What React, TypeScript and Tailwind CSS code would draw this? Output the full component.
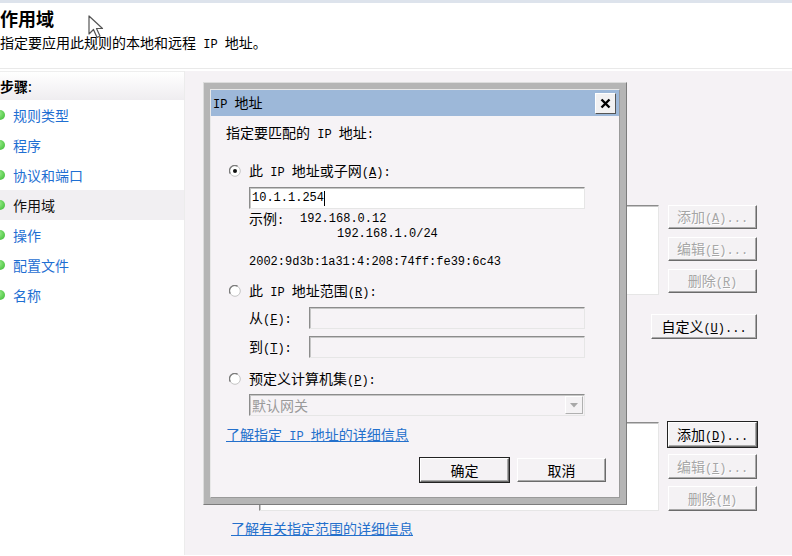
import React from 'react';
import clsx from 'clsx';

// splits a label into ascii / cjk runs so the ascii part can use a half-width mono face
function Mixed({ text }: { text: string }) {
  const parts = text.match(/[\x00-\x7F]+|[^\x00-\x7F]+/g) ?? [];
  return (
    <span className="whitespace-pre">
      {parts.map((p, i) =>
        /^[\x00-\x7F]/.test(p) ? (
          <span key={i} className="font-['Liberation_Mono'] text-[12px]">{p}</span>
        ) : (
          <span key={i}>{p}</span>
        )
      )}
    </span>
  );
}

function Acc({ before, k, after }: { before: string; k: string; after: string }) {
  return (
    <span className="whitespace-pre">
      <Mixed text={before} />
      <span className="font-['Liberation_Mono'] text-[12px]">(</span>
      <span className="font-['Liberation_Mono'] text-[12px] underline">{k}</span>
      <Mixed text={')' + after} />
    </span>
  );
}

function Btn({
  children,
  className,
  def,
  disabled,
}: {
  children: React.ReactNode;
  className?: string;
  def?: boolean;
  disabled?: boolean;
}) {
  return (
    <div
      className={clsx(
        'flex items-center justify-center bg-[#f4f2f4] border border-t-white border-l-white border-r-[#6b6b6b] border-b-[#6b6b6b] shadow-[inset_-1px_-1px_0_#a9a9a9] whitespace-pre',
        def && 'outline outline-1 outline-[#222]',
        disabled ? 'text-[#a6a6a6] [text-shadow:1px_1px_0_#fff]' : 'text-black',
        className
      )}
    >
      {children}
    </div>
  );
}

function Radio({ checked }: { checked?: boolean }) {
  return (
    <svg width="12" height="12" viewBox="0 0 12 12" className="shrink-0">
      <circle cx="6" cy="6" r="5.3" fill="#fff" stroke="#c4c4c4" strokeWidth="1" />
      <path d="M1.3 8.6 A5.3 5.3 0 0 1 8.6 1.3" fill="none" stroke="#7c7c7c" strokeWidth="1.3" />
      {checked && <circle cx="6" cy="6" r="2" fill="#111" />}
    </svg>
  );
}

function Sunken({ className, children }: { className?: string; children?: React.ReactNode }) {
  return (
    <div
      className={clsx(
        'border border-t-[#8c8c8c] border-l-[#8c8c8c] border-r-[#e6e6e6] border-b-[#e6e6e6] shadow-[inset_1px_1px_0_#c6c6c6]',
        className
      )}
    >
      {children}
    </div>
  );
}

const steps = ['规则类型', '程序', '协议和端口', '作用域', '操作', '配置文件', '名称'];

export default function App() {
  return (
    <div className="relative w-[792px] h-[556px] overflow-hidden bg-white font-['Noto_Sans_CJK_SC',sans-serif] text-[14px] leading-none text-black">
      <div className="h-[3px] bg-[#dde3ec]" />

      {/* header */}
      <div className="h-[66px] border-b border-[#e9e9e9]">
        <div className="pt-[8px] h-[22px] text-[18px] font-bold flex items-center">作用域</div>
        <div className="mt-[10px] h-[16px] flex items-center">
          <Mixed text="指定要应用此规则的本地和远程 IP 地址。" />
        </div>
      </div>

      <div className="flex h-[486px] pt-[2px]">
        {/* steps */}
        <div className="w-[185px] bg-white border-r border-[#ececec]">
          <div className="h-[29px] border-t border-[#eeeeee] bg-gradient-to-b from-white to-[#efedf0] flex items-center font-bold">
            步骤<span className="font-normal">:</span>
          </div>
          {steps.map((s) => (
            <div
              key={s}
              className={clsx(
                'h-[30px] flex items-center',
                s === '作用域' ? 'bg-[#f1eff2] text-[#111]' : 'text-[#1f6fd2]'
              )}
            >
              <span className="-ml-[5px] mr-[8px] w-[10px] h-[10px] rounded-full bg-[radial-gradient(circle_at_35%_35%,#9ef08e,#33b52c)]" />
              {s}
            </div>
          ))}
        </div>

        {/* main panel behind the dialog */}
        <div className="flex-1 bg-[#f5f2f5] pl-[46px]">
          <div className="ml-[28px] mt-[134px] flex gap-[9px]">
            <Sunken className="w-[400px] h-[90px] bg-white" />
            <div className="flex flex-col gap-[8px]">
              <Btn className="w-[89px] h-[24px]" disabled>
                <Acc before="添加" k="A" after="..." />
              </Btn>
              <Btn className="w-[89px] h-[24px]" disabled>
                <Acc before="编辑" k="E" after="..." />
              </Btn>
              <Btn className="w-[89px] h-[24px]" disabled>
                <Acc before="删除" k="R" after="" />
              </Btn>
            </div>
          </div>
          <div className="ml-[28px] w-[498px] mt-[19px] flex justify-end">
            <Btn className="w-[106px] h-[25px]">
              <Acc before="自定义" k="U" after="..." />
            </Btn>
          </div>
          <div className="ml-[28px] mt-[83px] flex gap-[9px]">
            <Sunken className="w-[400px] h-[89px] bg-white" />
            <div className="flex flex-col gap-[7px]">
              <Btn className="w-[89px] h-[25px]" def>
                <Acc before="添加" k="D" after="..." />
              </Btn>
              <Btn className="w-[89px] h-[25px]" disabled>
                <Acc before="编辑" k="I" after="..." />
              </Btn>
              <Btn className="w-[89px] h-[25px]" disabled>
                <Acc before="删除" k="M" after="" />
              </Btn>
            </div>
          </div>
          <div className="mt-[9px] h-[16px] flex items-center">
            <span className="text-[#2470cc] underline">了解有关指定范围的详细信息</span>
          </div>
        </div>
      </div>

      {/* IP dialog */}
      <div className="absolute left-[203px] top-[82px] w-[424px] h-[423px] bg-[#b5b5b5] border border-t-[#dcdcdc] border-l-[#dcdcdc] border-r-[#7c7c7c] border-b-[#7c7c7c] p-[6px]">
        <div className="h-full border border-t-[#e8e8e8] border-l-[#e8e8e8] border-r-[#9a9a9a] border-b-[#9a9a9a] bg-[#f6f3f6] flex flex-col">
          <div className="h-[26px] bg-[#9db8d9] flex items-center justify-between pl-[2px] pr-[3px]">
            <Mixed text="IP 地址" />
            <div className="w-[21px] h-[21px] bg-[#f2f1f2] border border-t-white border-l-white border-r-[#555] border-b-[#555] flex items-center justify-center">
              <svg width="11" height="11" viewBox="0 0 11 11">
                <path d="M1.5 1.5 L9.5 9.5 M9.5 1.5 L1.5 9.5" stroke="#000" strokeWidth="2.4" />
              </svg>
            </div>
          </div>

          <div className="pl-[15px] pr-[13px] flex flex-col">
            <div className="mt-[9px] h-[16px] flex items-center">
              <Mixed text="指定要匹配的 IP 地址:" />
            </div>

            <div className="mt-[22px] h-[16px] flex items-center">
              <span className="ml-[3px] mr-[8px]"><Radio checked /></span>
              <Acc before="此 IP 地址或子网" k="A" after=":" />
            </div>
            <Sunken className="mt-[8px] ml-[23px] w-[336px] h-[22px] bg-white flex items-center pl-[2px]">
              <span className="font-['Liberation_Mono'] text-[12px]">10.1.1.254</span>
              <span className="w-px h-[15px] bg-black" />
            </Sunken>
            <div className="mt-[2px] ml-[23px] h-[15px] flex items-center">
              <span className="w-[51px]">示例<span className="font-['Liberation_Mono'] text-[12px]">:</span></span>
              <span className="font-['Liberation_Mono'] text-[12px]">192.168.0.12</span>
            </div>
            <div className="ml-[111px] h-[15px] flex items-center font-['Liberation_Mono'] text-[12px]">192.168.1.0/24</div>
            <div className="mt-[13px] ml-[23px] h-[16px] flex items-center font-['Liberation_Mono'] text-[12px]">
              2002:9d3b:1a31:4:208:74ff:fe39:6c43
            </div>

            <div className="mt-[13px] h-[16px] flex items-center">
              <span className="ml-[3px] mr-[8px]"><Radio /></span>
              <Acc before="此 IP 地址范围" k="R" after=":" />
            </div>
            <div className="mt-[8px] ml-[23px] flex items-center">
              <span className="w-[60px]"><Acc before="从" k="F" after=":" /></span>
              <Sunken className="w-[276px] h-[22px]" />
            </div>
            <div className="mt-[7px] ml-[23px] flex items-center">
              <span className="w-[60px]"><Acc before="到" k="T" after=":" /></span>
              <Sunken className="w-[276px] h-[22px]" />
            </div>

            <div className="mt-[13px] h-[16px] flex items-center">
              <span className="ml-[3px] mr-[8px]"><Radio /></span>
              <Acc before="预定义计算机集" k="P" after=":" />
            </div>
            <Sunken className="mt-[7px] ml-[23px] w-[336px] h-[22px] flex items-center justify-between pl-[2px] pr-[1px]">
              <span className="text-[#9a9a9a]">默认网关</span>
              <div className="w-[18px] h-[18px] bg-[#f4f2f4] border border-t-white border-l-white border-r-[#b0b0b0] border-b-[#b0b0b0] flex items-center justify-center">
                <svg width="8" height="5" viewBox="0 0 8 5"><path d="M0 0 H8 L4 4.5 Z" fill="#a8a8a8" /></svg>
              </div>
            </Sunken>

            <div className="mt-[11px] h-[16px] flex items-center">
              <span className="text-[#2470cc] underline whitespace-pre"><Mixed text="了解指定 IP 地址的详细信息" /></span>
            </div>

            <div className="mt-[15px] flex justify-end gap-[8px]">
              <Btn className="w-[89px] h-[24px]" def>确定</Btn>
              <Btn className="w-[89px] h-[24px]">取消</Btn>
            </div>
          </div>
        </div>
      </div>

      {/* mouse pointer */}
      <svg className="absolute left-[88px] top-[15px]" width="18" height="25" viewBox="0 0 18 25">
        <path d="M1 1 L1 19 L5.5 14.5 L9 22.5 L12 21 L8.5 13.5 L14.5 13.5 Z" fill="#fff" stroke="#555" strokeWidth="1.2" strokeLinejoin="round" />
      </svg>
    </div>
  );
}
